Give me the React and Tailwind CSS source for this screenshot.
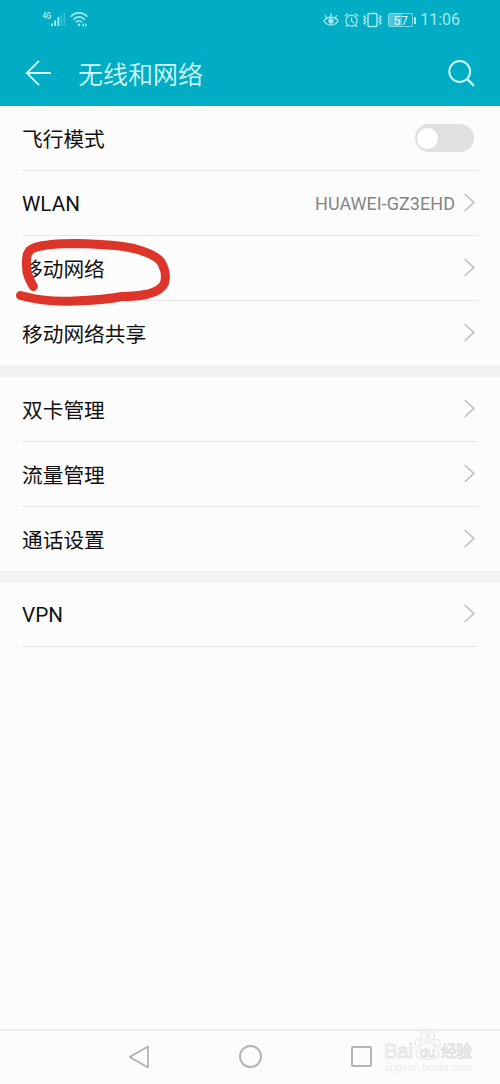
const GROUPS = [
  {
    id: "wireless",
    items: [
      { label: "飞行模式", toggle: true },
      { label: "WLAN", value: "HUAWEI-GZ3EHD", latin: true },
      { label: "移动网络", marked: true },
      { label: "移动网络共享" },
    ],
  },
  {
    id: "sim",
    items: [{ label: "双卡管理" }, { label: "流量管理" }, { label: "通话设置" }],
  },
  { id: "vpn", items: [{ label: "VPN", divider: true, latin: true }] },
];

function SignalIcon() {
  return (
    <svg className="h-[18px] w-6" viewBox="0 0 24 18" fill="#a9e8f0">
      <text x="0.5" y="7.5" fontSize="9" fontWeight="700" textLength="8.5" lengthAdjust="spacingAndGlyphs">
        4G
      </text>
      <rect x="9" y="12.5" width="1.8" height="2.5" />
      <rect x="12.2" y="9.5" width="1.8" height="5.5" />
      <rect x="15.4" y="6" width="1.8" height="9" />
      <rect x="18.6" y="4" width="1.5" height="11" opacity="0.35" />
      <rect x="21.6" y="1.5" width="1.5" height="13.5" opacity="0.35" />
    </svg>
  );
}

function WifiIcon() {
  return (
    <svg className="h-[18px] w-[18px]" viewBox="0 0 18 18" fill="none" stroke="#a9e8f0" strokeWidth="1.7">
      <path d="M.8 5.7C5.2.7 12.8.7 17.2 5.7" />
      <path d="M3.4 8.6C6.6 5 11.4 5 14.6 8.6" />
      <path d="M5.8 11.3C7.7 9.2 10.3 9.2 12.2 11.3" />
      <circle cx="9" cy="13.8" r="1.4" fill="#a9e8f0" stroke="none" />
      <path d="M14 12l-2 2 2 2zM15 12l2 2-2 2z" fill="#a9e8f0" stroke="none" />
    </svg>
  );
}

function EyeIcon() {
  return (
    <svg className="h-4 w-4" viewBox="0 0 16 16" fill="none" stroke="#a9e8f0" strokeWidth="1.3">
      <path d="M.8 9C4.2 4 11.8 4 15.2 9C11.8 14.3 4.2 14.3.8 9Z" />
      <circle cx="8" cy="9" r="2.7" fill="#a9e8f0" stroke="none" />
      <path d="M8 4.8V1.2M3.8 5.8L2 3M12.2 5.8L14 3" />
      <circle cx="9" cy="8" r="0.6" fill="#00adc5" stroke="none" />
    </svg>
  );
}

function AlarmIcon() {
  return (
    <svg className="h-4 w-[15px]" viewBox="0 0 15 16" fill="none" stroke="#a9e8f0" strokeWidth="1.3">
      <circle cx="7.5" cy="8.7" r="5.6" />
      <path d="M7.5 5.3V9l2.6 2.2M.8 4.2L4 1.4M14.2 4.2L11 1.4M3.7 12.8L2 14.7M11.3 12.8L13 14.7" />
    </svg>
  );
}

function VibrateIcon() {
  return (
    <svg className="h-4 w-[19px]" viewBox="0 0 19 16" fill="none" stroke="#a9e8f0" strokeWidth="1.5">
      <rect x="5" y="1.4" width="9" height="13.2" rx="1" />
      <path d="M2.4 3.4L1 5l1.6 1.5L1 8l1.6 1.5L1 11l1.4 1.6M16.6 3.4L18 5l-1.6 1.5L18 8l-1.6 1.5L18 11l-1.4 1.6" />
    </svg>
  );
}

function Battery() {
  return (
    <span className="flex items-center gap-px">
      <span className="flex h-[14px] w-[25px] items-center justify-center rounded-[2px] border border-[#7fd8e4] bg-linear-to-r from-[#4fc5d6] from-57% to-transparent to-57% text-[13px] leading-none text-[#d6f7fa]">
        57
      </span>
      <span className="h-[7px] w-[2px] bg-[#a9e8f0]" />
    </span>
  );
}

function StatusBar() {
  return (
    <div className="flex h-10 items-center justify-between pr-[40px] pl-[42px]">
      <div className="flex items-center gap-1">
        <SignalIcon />
        <WifiIcon />
      </div>
      <div className="flex items-center">
        <EyeIcon />
        <span className="ml-[5px]">
          <AlarmIcon />
        </span>
        <span className="ml-[4px]">
          <VibrateIcon />
        </span>
        <span className="ml-[6px]">
          <Battery />
        </span>
        <span className="ml-[4px] text-[16px] leading-5 text-[#a9e8f0]">11:06</span>
      </div>
    </div>
  );
}

function TitleBar() {
  return (
    <div className="flex h-[66px] items-center pr-[25px] pl-[25px]">
      <svg className="h-[26px] w-[26px]" viewBox="0 0 26 26" fill="none" stroke="#d4fafa" strokeWidth="1.8">
        <path d="M26 13H2M14 .8L1.8 13L14 25.2" />
      </svg>
      <h1 className="ml-[27px] flex-1 pt-[5px] text-[25px] leading-8 font-[350] text-[#d4fafa]">无线和网络</h1>
      <svg className="h-[27px] w-[27px]" viewBox="0 0 27 27" fill="none" stroke="#d4fafa" strokeWidth="2">
        <circle cx="11.7" cy="11.5" r="10.4" />
        <path d="M19.2 19L26 25.8" strokeWidth="2.4" />
      </svg>
    </div>
  );
}

function Chevron() {
  return (
    <svg className="mb-[2px] ml-[9px] h-[19px] w-[11px]" viewBox="0 0 11 19" fill="none" stroke="#c2c2c2" strokeWidth="1.7">
      <path d="M.7 1L9.7 9.5L.7 18" />
    </svg>
  );
}

function Scribble() {
  return (
    <svg
      className="pointer-events-none absolute top-0 -left-[22px] z-10 h-[72px] w-[180px]"
      viewBox="0 236 180 72"
      fill="none"
      stroke="#dd3529"
      strokeWidth="9"
      strokeLinecap="round"
      strokeLinejoin="round"
    >
      <path d="M33.3 286.5C29 279 26.500 274 26.500 266C26 256 27 250 35 247.500C44 244.500 62 243.500 77 243.500C97 244 119 245 134 248.500C147 252 157 256 161 262C164.500 268 166.500 276 164.500 283C162 289 156 292 148 294C141 295.500 132 296.500 122 296.500C112 298.500 90 300.500 74 301C55 302 37 300 20.500 295.500" />
    </svg>
  );
}

function SettingRow({ item, last }) {
  return (
    <li
      className={`relative flex items-center justify-between ${last ? "h-16" : "h-[65px]"} ${
        !last || item.divider ? "border-b border-[#e6e6e6]" : ""
      }`}
    >
      <span className={`text-[20.7px] leading-7 text-[#111] ${item.latin ? "pt-px" : "pt-[3px]"}`}>
        {item.label}
      </span>
      {item.toggle ? (
        <span className="mr-1 flex h-7 w-[59px] items-center rounded-full bg-[#e0e0e0] px-[2px]">
          <span className="h-[21px] w-[21px] rounded-full bg-white" />
        </span>
      ) : (
        <span className="mr-[3px] flex items-center">
          {item.value && (
            <span className="pt-px text-[18px] leading-6 tracking-[0.03px] text-[#858585]">{item.value}</span>
          )}
          <Chevron />
        </span>
      )}
      {item.marked && <Scribble />}
    </li>
  );
}

function Watermark() {
  return (
    <div className="absolute top-0 right-[22px] font-['Liberation_Sans','Noto_Sans_CJK_SC',sans-serif]">
      <svg className="h-[50px] w-[94px]" viewBox="0 0 94 50" fill="#fcfcfc" stroke="#dedede" strokeWidth="0.8">
        <text x="0" y="27" fontSize="20" textLength="29" lengthAdjust="spacingAndGlyphs">
          Bai
        </text>
        <ellipse cx="34" cy="12" rx="2.8" ry="4" />
        <ellipse cx="40" cy="5" rx="3" ry="4.3" />
        <ellipse cx="47.500" cy="5" rx="3" ry="4.3" />
        <ellipse cx="53.500" cy="12" rx="2.8" ry="4" />
        <path d="M44 11C49 11 50 16 54 19C57 23 54 28 49 28H38C32 28 30 23 34 19C38 16 39 11 44 11Z" />
        <text x="36" y="25.5" fontSize="13" textLength="15" lengthAdjust="spacingAndGlyphs">
          du
        </text>
        <text x="57" y="25.5" fontSize="16" textLength="31">
          经验
        </text>
        <text x="1" y="40" fontSize="11" fill="#ececec" stroke="none" textLength="87" lengthAdjust="spacingAndGlyphs">
          jingyan.baidu.com
        </text>
      </svg>
    </div>
  );
}

function NavBar() {
  return (
    <nav className="relative flex h-[55px] items-center justify-between border-t-2 border-[#ececec] pr-[128px] pb-[2px] pl-[128px]">
      <svg className="h-6 w-[22px]" viewBox="0 0 22 24" fill="none" stroke="#b0b0b0" strokeWidth="1.7" strokeLinejoin="round">
        <path d="M20 1.5V22.5L1.8 12Z" />
      </svg>
      <span className="h-[23px] w-[23px] rounded-full border-2 border-[#b4b4b4]" />
      <span className="h-[21px] w-[21px] rounded-[2px] border-2 border-[#b4b4b4]" />
      <Watermark />
    </nav>
  );
}

export default function App() {
  return (
    <div className="flex h-[1084px] w-[500px] flex-col overflow-hidden bg-[#fcfcfc] font-[Roboto,'Noto_Sans_CJK_SC',sans-serif]">
      <header className="h-[106px] shrink-0 bg-[#00adc5]">
        <StatusBar />
        <TitleBar />
      </header>
      <main className="flex flex-1 flex-col gap-3 bg-[#f2f2f2]">
        {GROUPS.map((group, g) => (
          <ul
            key={group.id}
            className={`bg-[#fcfcfc] px-[22px] ${g === GROUPS.length - 1 ? "flex-1" : ""}`}
          >
            {group.items.map((item, i) => (
              <SettingRow key={item.label} item={item} last={i === group.items.length - 1} />
            ))}
          </ul>
        ))}
      </main>
      <NavBar />
    </div>
  );
}
